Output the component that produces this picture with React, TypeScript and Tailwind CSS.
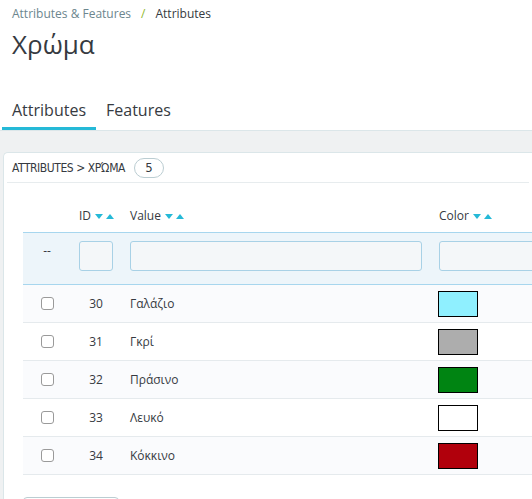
import React from "react";

const rows = [
  { id: 30, name: "Γαλάζιο", color: "#8ff0ff" },
  { id: 31, name: "Γκρί", color: "#adadad" },
  { id: 32, name: "Πράσινο", color: "#008412" },
  { id: 33, name: "Λευκό", color: "#ffffff" },
  { id: 34, name: "Κόκκινο", color: "#b1000c" },
];

const SortArrows = () => (
  <span className="ml-[4px] inline-flex items-center gap-[3px]">
    <svg width="8" height="5" viewBox="0 0 8 5">
      <path d="M0 0H8L4 5Z" fill="#25b9d7" />
    </svg>
    <svg width="8" height="5" viewBox="0 0 8 5">
      <path d="M0 5H8L4 0Z" fill="#25b9d7" />
    </svg>
  </span>
);

const condensed = { fontFamily: '"DejaVu Sans", sans-serif', fontStretch: "condensed" as const };

const App: React.FC = () => {
  return (
    <div
      className="min-h-screen bg-[#eff1f2] text-[#363a41]"
      style={{ fontFamily: '"Open Sans", "Noto Sans", sans-serif' }}
    >
      {/* Page header */}
      <div className="bg-white border-b border-[#dbe6e9]">
        <div className="pl-3 pt-[6px] text-xs leading-4">
          <span className="text-[#6c868e]">Attributes &amp; Features</span>
          <span className="mx-[10px] text-[#8fb82f]">/</span>
          <span className="text-[#363a41]">Attributes</span>
        </div>
        <h1 className="mt-[6px] pl-3 text-[26px] leading-8 font-normal">Χρώμα</h1>
        <div className="mt-[38px] flex pl-[2px]">
          <div className="px-[10px] pb-[5px] border-b-[3px] border-[#25b9d7] text-base leading-6">
            Attributes
          </div>
          <div className="px-[10px] pb-[5px] border-b-[3px] border-transparent text-base leading-6">
            Features
          </div>
        </div>
      </div>

      {/* Card */}
      <div className="mt-[21px] ml-[3px] bg-white border-l border-t border-[#dbe6e9] rounded-tl-[5px] pb-[40px]">
        <div className="mx-[3px] h-[30px] flex items-center border-b border-[#e7ecee] pl-[5px]">
          <span className="text-[12px] uppercase tracking-[-0.45px]" style={condensed}>
            Attributes &gt; Χρώμα
          </span>
          <span
            className="ml-[9px] h-5 w-[30px] shrink-0 flex items-center justify-center rounded-full border border-[#bbcdd2] text-[13px]"
            style={condensed}
          >
            5
          </span>
        </div>

        <div className="ml-[19px] text-xs">
          {/* Column titles */}
          <div className="flex h-[49px] items-end pb-[8px] text-[12px]">
            <div className="w-[48px] shrink-0" />
            <div className="w-[51px] shrink-0 pl-2 flex items-center">ID<SortArrows /></div>
            <div className="w-[309px] shrink-0 pl-2 flex items-center">Value<SortArrows /></div>
            <div className="flex-1 pl-2 flex items-center">Color<SortArrows /></div>
          </div>

          {/* Filters */}
          <div className="flex h-[53px] items-start pt-[8px] bg-[#edf5fa] border-y border-[#a7d6ee] overflow-hidden">
            <div className="w-[48px] shrink-0 text-center leading-5">--</div>
            <div className="w-[51px] shrink-0 pl-2">
              <div className="h-[30px] w-[34px] rounded-[3px] border border-[#a8d1e6] bg-[#f4f7f9]" />
            </div>
            <div className="w-[309px] shrink-0 pl-2">
              <div className="h-[30px] w-[292px] rounded-[3px] border border-[#a8d1e6] bg-[#f4f7f9]" />
            </div>
            <div className="shrink-0 pl-2">
              <div className="h-[30px] w-[120px] rounded-[3px] border border-[#a8d1e6] bg-[#f4f7f9]" />
            </div>
          </div>

          {/* Rows */}
          {rows.map((r, i) => (
            <div
              key={r.id}
              className={`flex h-[38px] items-center border-b border-[#e5eaed] ${i % 2 === 0 ? "bg-[#fafbfd]" : "bg-white"}`}
            >
              <div className="w-[48px] shrink-0 flex justify-center">
                <span className="block h-[13px] w-[13px] rounded-[3px] border border-[#9a9a9a] bg-white" />
              </div>
              <div className="w-[51px] shrink-0 pl-2">
                <div className="w-[34px] text-center">{r.id}</div>
              </div>
              <div className="w-[309px] shrink-0 pl-2">{r.name}</div>
              <div className="flex-1 pl-[7px]">
                <div
                  className="h-[26px] w-[40px] border border-black"
                  style={{ backgroundColor: r.color }}
                />
              </div>
            </div>
          ))}

          <div className="mt-[22px] h-[30px] w-[96px] rounded-[4px] border border-[#bbcdd2] bg-white" />
        </div>
      </div>
    </div>
  );
};

export default App;
